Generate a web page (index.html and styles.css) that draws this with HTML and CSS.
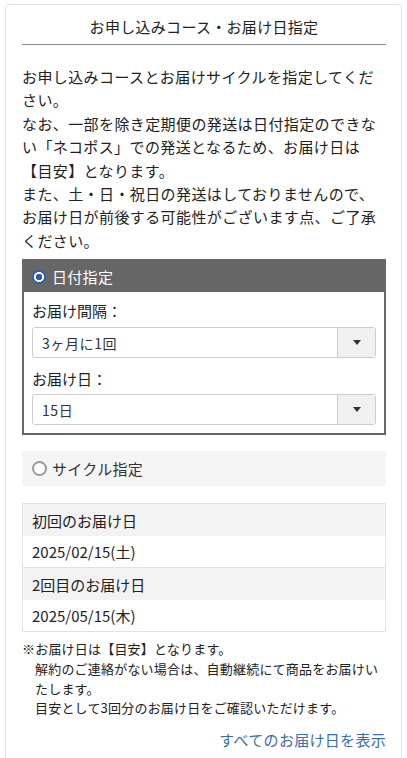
FILE: index.html
```html
<!DOCTYPE html>
<html lang="ja">
<head>
  <meta charset="UTF-8">
  <title>お申し込みコース・お届け日指定</title>
  <link rel="stylesheet" href="styles.css">
</head>
<body>

  <div class="card">
    <h2 class="card-title">お申し込みコース・お届け日指定</h2>

    <p class="intro">
      お申し込みコースとお届けサイクルを指定してください。<br>
      なお、一部を除き定期便の発送は日付指定のできない「ネコポス」での発送となるため、お届け日は【目安】となります。<br>
      また、土・日・祝日の発送はしておりませんので、お届け日が前後する可能性がございます点、ご了承ください。
    </p>

    <div class="option option-active">
      <div class="option-head">
        <span class="radio radio-on"></span>日付指定
      </div>
      <div class="option-body">
        <div class="field-label">お届け間隔：</div>
        <div class="dropdown">
          <span class="dropdown-text">3ヶ月に1回</span>
          <span class="dropdown-btn"><span class="caret"></span></span>
        </div>
        <div class="field-label second">お届け日：</div>
        <div class="dropdown">
          <span class="dropdown-text">15日</span>
          <span class="dropdown-btn"><span class="caret"></span></span>
        </div>
      </div>
    </div>

    <div class="option option-off">
      <span class="radio"></span>サイクル指定
    </div>

    <table class="dates">
      <tr><th>初回のお届け日</th></tr>
      <tr><td>2025/02/15(土)</td></tr>
      <tr><th>2回目のお届け日</th></tr>
      <tr><td>2025/05/15(木)</td></tr>
    </table>

    <p class="note">
      ※お届け日は【目安】となります。<br>
      解約のご連絡がない場合は、自動継続にて商品をお届けいたします。<br>
      目安として3回分のお届け日をご確認いただけます。
    </p>

    <div class="more"><a href="#">すべてのお届け日を表示</a></div>
  </div>

</body>
</html>
```

FILE: styles.css
```css
body {
  font-family: "Noto Sans CJK JP", "Noto Sans", sans-serif;
  color: #222;
  background-color: #fff;
  margin: 0;
}
.card {
  margin: 4px 5px 0;
  padding: 0 15px 20px 16px;
  border: 1px solid #e2e2e2;
  border-radius: 4px;
  min-height: 760px;
}
.card-title {
  font-size: 15px;
  font-weight: normal;
  line-height: 22px;
  letter-spacing: 0.3px;
  text-align: center;
  margin: 0;
  padding: 11px 0 6px;
  border-bottom: 1px solid #8c8c8c;
}
.intro {
  font-size: 15px;
  line-height: 23.4px;
  letter-spacing: 0.4px;
  margin: 20px 0 8px;
}
.option-active {
  border: 2px solid #666;
  margin-top: -1px;
}
.option-head {
  display: flex;
  align-items: center;
  gap: 6px;
  height: 31px;
  padding-left: 8px;
  background-color: #666;
  color: #fff;
  font-size: 15px;
  letter-spacing: 0.3px;
}
.radio {
  flex: none;
  width: 15px;
  height: 15px;
  box-sizing: border-box;
  border-radius: 50%;
  border: 2px solid #999;
  background-color: #fff;
}
.radio-on {
  width: 14px;
  height: 14px;
  border: none;
  background: radial-gradient(circle, #2c5cae 0 3px, #fff 3.5px 4.8px, #2c5cae 5.3px);
}
.option-body {
  padding: 8px 8px 8px;
}
.field-label {
  font-size: 15px;
  line-height: 22px;
  margin-bottom: 5px;
}
.field-label.second {
  margin-top: 10px;
  margin-bottom: 4px;
}
.dropdown {
  display: flex;
  height: 31px;
  box-sizing: border-box;
  border: 1px solid #ccc;
  border-radius: 3px;
  overflow: hidden;
  background-color: #fff;
}
.dropdown-text {
  flex: 1;
  display: flex;
  align-items: center;
  padding-left: 9px;
  font-size: 14px;
  color: #333;
  letter-spacing: 0.6px;
}
.dropdown-btn {
  width: 37px;
  display: flex;
  align-items: center;
  justify-content: center;
  background-color: #f0f0f0;
  border-left: 1px solid #ccc;
}
.caret {
  width: 0;
  height: 0;
  border-left: 4px solid transparent;
  border-right: 4px solid transparent;
  border-top: 5px solid #333;
}
.option-off {
  display: flex;
  align-items: center;
  gap: 5px;
  height: 35px;
  margin-top: 16px;
  padding-left: 10px;
  background-color: #f5f5f5;
  font-size: 15px;
  letter-spacing: 0.3px;
  color: #333;
}
.dates {
  width: 100%;
  margin-top: 17px;
  border-collapse: collapse;
  border: 1px solid #e2e2e2;
}
.dates th, .dates td {
  font-size: 15px;
  font-weight: normal;
  text-align: left;
  height: 32px;
  padding: 0 0 0 9px;
  box-sizing: border-box;
}
.dates th {
  background-color: #f3f3f3;
}
.dates tr + tr th {
  border-top: 1px solid #e2e2e2;
}
.note {
  font-size: 13px;
  line-height: 19.7px;
  letter-spacing: 0.2px;
  margin: 7px 0 0;
  padding-left: 13px;
  text-indent: -13px;
}
.more {
  text-align: right;
  margin-top: 10px;
  line-height: 22px;
}
.more a {
  font-size: 15px;
  letter-spacing: 0.3px;
  color: #3a6ea5;
  text-decoration: none;
}
```
